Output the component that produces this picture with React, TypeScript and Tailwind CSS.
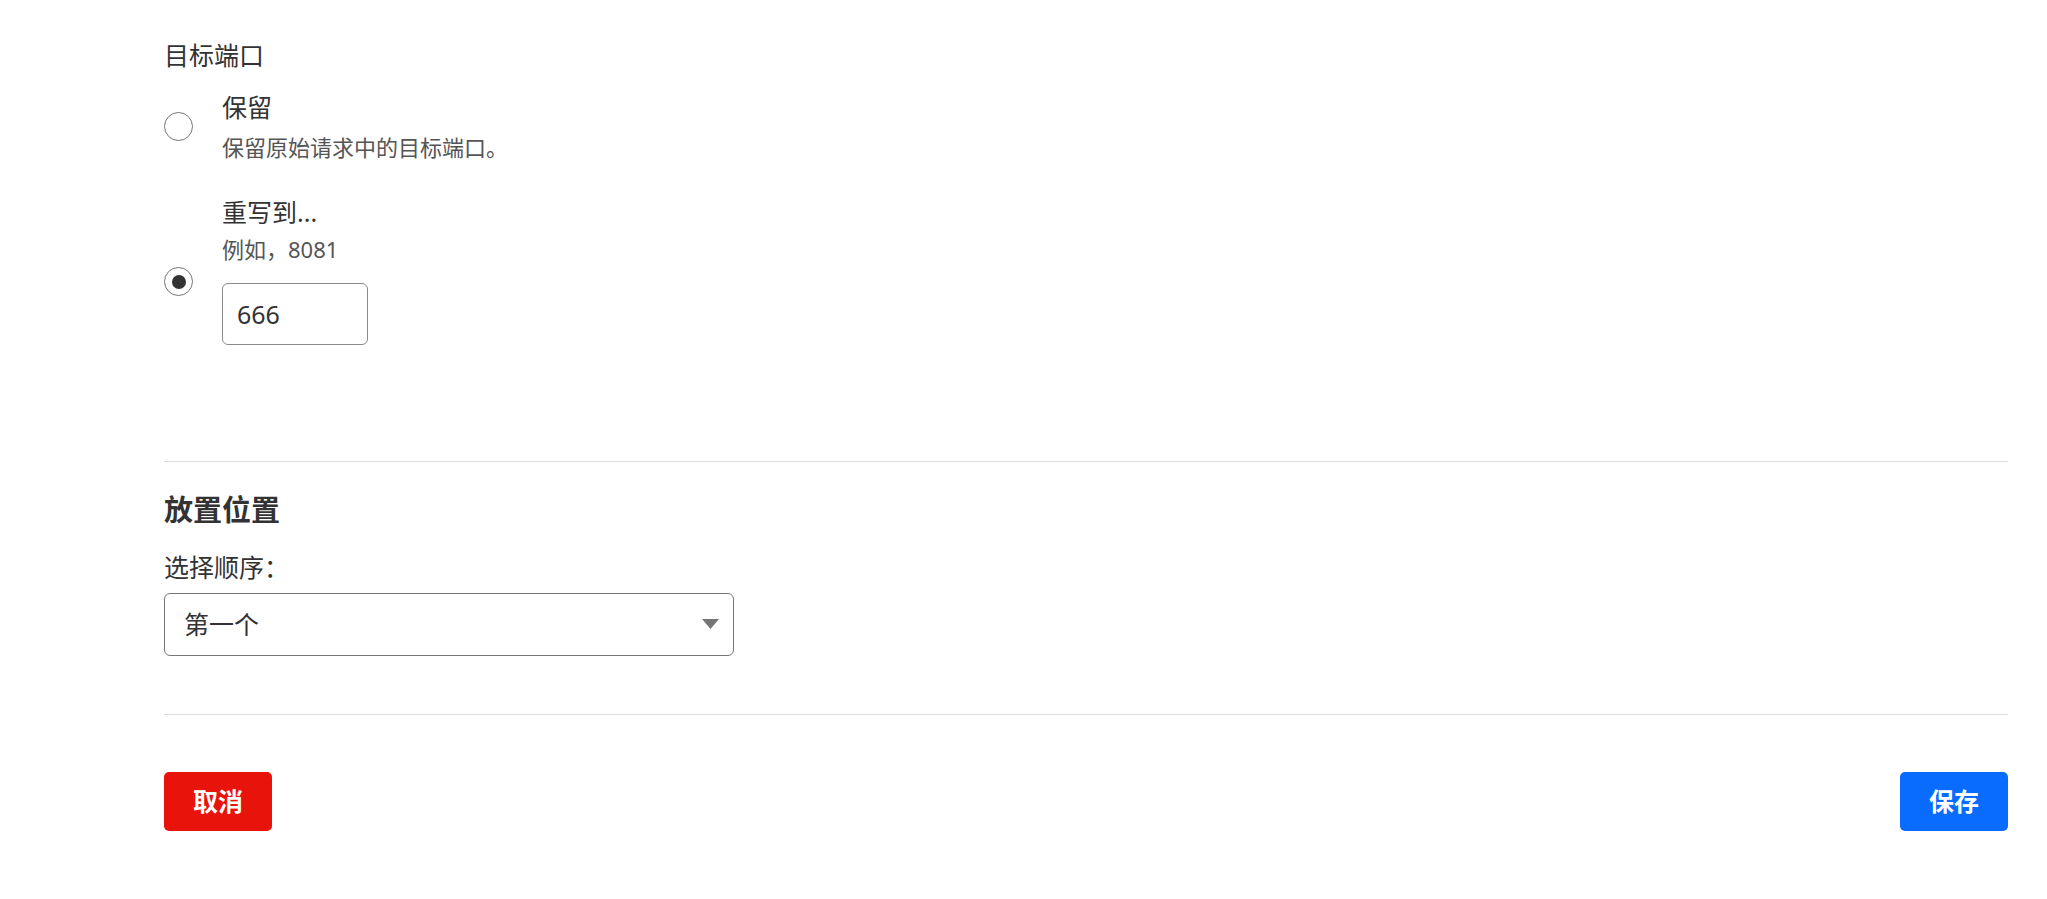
import { useState } from 'react';

const font = 'font-["Noto_Sans","Noto_Sans_CJK_SC",sans-serif]';

function Radio({ checked }: { checked: boolean }) {
    return (
        <span className="flex h-[29px] w-[29px] shrink-0 items-center justify-center rounded-full border border-[#767676] bg-white">
            {checked && <span className="h-[14px] w-[14px] rounded-full bg-[#333333]" />}
        </span>
    );
}

export default function App() {
    const [mode, setMode] = useState<'keep' | 'rewrite'>('rewrite');
    const [port, setPort] = useState('666');

    return (
        <div className={`${font} min-h-[899px] bg-white pl-[164px] pr-[39px] pt-[38px] text-[#333333]`}>
            {/* target port */}
            <div className="text-[25px] leading-[34px]">目标端口</div>

            <div className="mt-[18px] flex items-center gap-[29px]" onClick={() => setMode('keep')}>
                <Radio checked={mode === 'keep'} />
                <div>
                    <div className="text-[25px] leading-[34px]">保留</div>
                    <div className="mt-[8px] text-[22px] leading-[30px] text-[#555555]">保留原始请求中的目标端口。</div>
                </div>
            </div>

            <div className="mt-[33px] flex items-start gap-[29px]">
                <div className="pt-[72px]" onClick={() => setMode('rewrite')}>
                    <Radio checked={mode === 'rewrite'} />
                </div>
                <div>
                    <div className="text-[25px] leading-[34px]">重写到...</div>
                    <div className="mt-[5px] text-[22px] leading-[30px] text-[#555555]">例如，8081</div>
                    <input
                        value={port}
                        onChange={e => setPort(e.target.value)}
                        className="mt-[19px] block h-[62px] w-[146px] rounded-[6px] border border-[#8a8a8a] px-[14px] text-[25px] text-[#333333] outline-none"
                    />
                </div>
            </div>

            <div className="mt-[116px] border-t border-[#dcdcdc]" />

            {/* placement */}
            <div className="mt-[30px] text-[29px] font-bold leading-[36px]">放置位置</div>
            <div className="mt-[22px] text-[25px] leading-[34px]">选择顺序：</div>
            <div className="relative mt-[9px] w-[570px]">
                <select className="block h-[63px] w-full appearance-none rounded-[6px] border border-[#767676] bg-white px-[19px] text-[25px] text-[#333333] outline-none">
                    <option>第一个</option>
                    <option>最后一个</option>
                </select>
                <svg className="pointer-events-none absolute right-[15px] top-[26px]" width="17" height="10" viewBox="0 0 17 10">
                    <path d="M0 0h17L8.5 10z" fill="#757575" />
                </svg>
            </div>

            <div className="mt-[58px] border-t border-[#dcdcdc]" />

            <div className="mt-[57px] flex items-center justify-between">
                <button className="h-[59px] w-[108px] rounded-[5px] bg-[#e8130a] text-[25px] font-bold text-white">取消</button>
                <button className="h-[59px] w-[108px] rounded-[5px] bg-[#0a6cff] text-[25px] font-bold text-white">保存</button>
            </div>
        </div>
    );
}
